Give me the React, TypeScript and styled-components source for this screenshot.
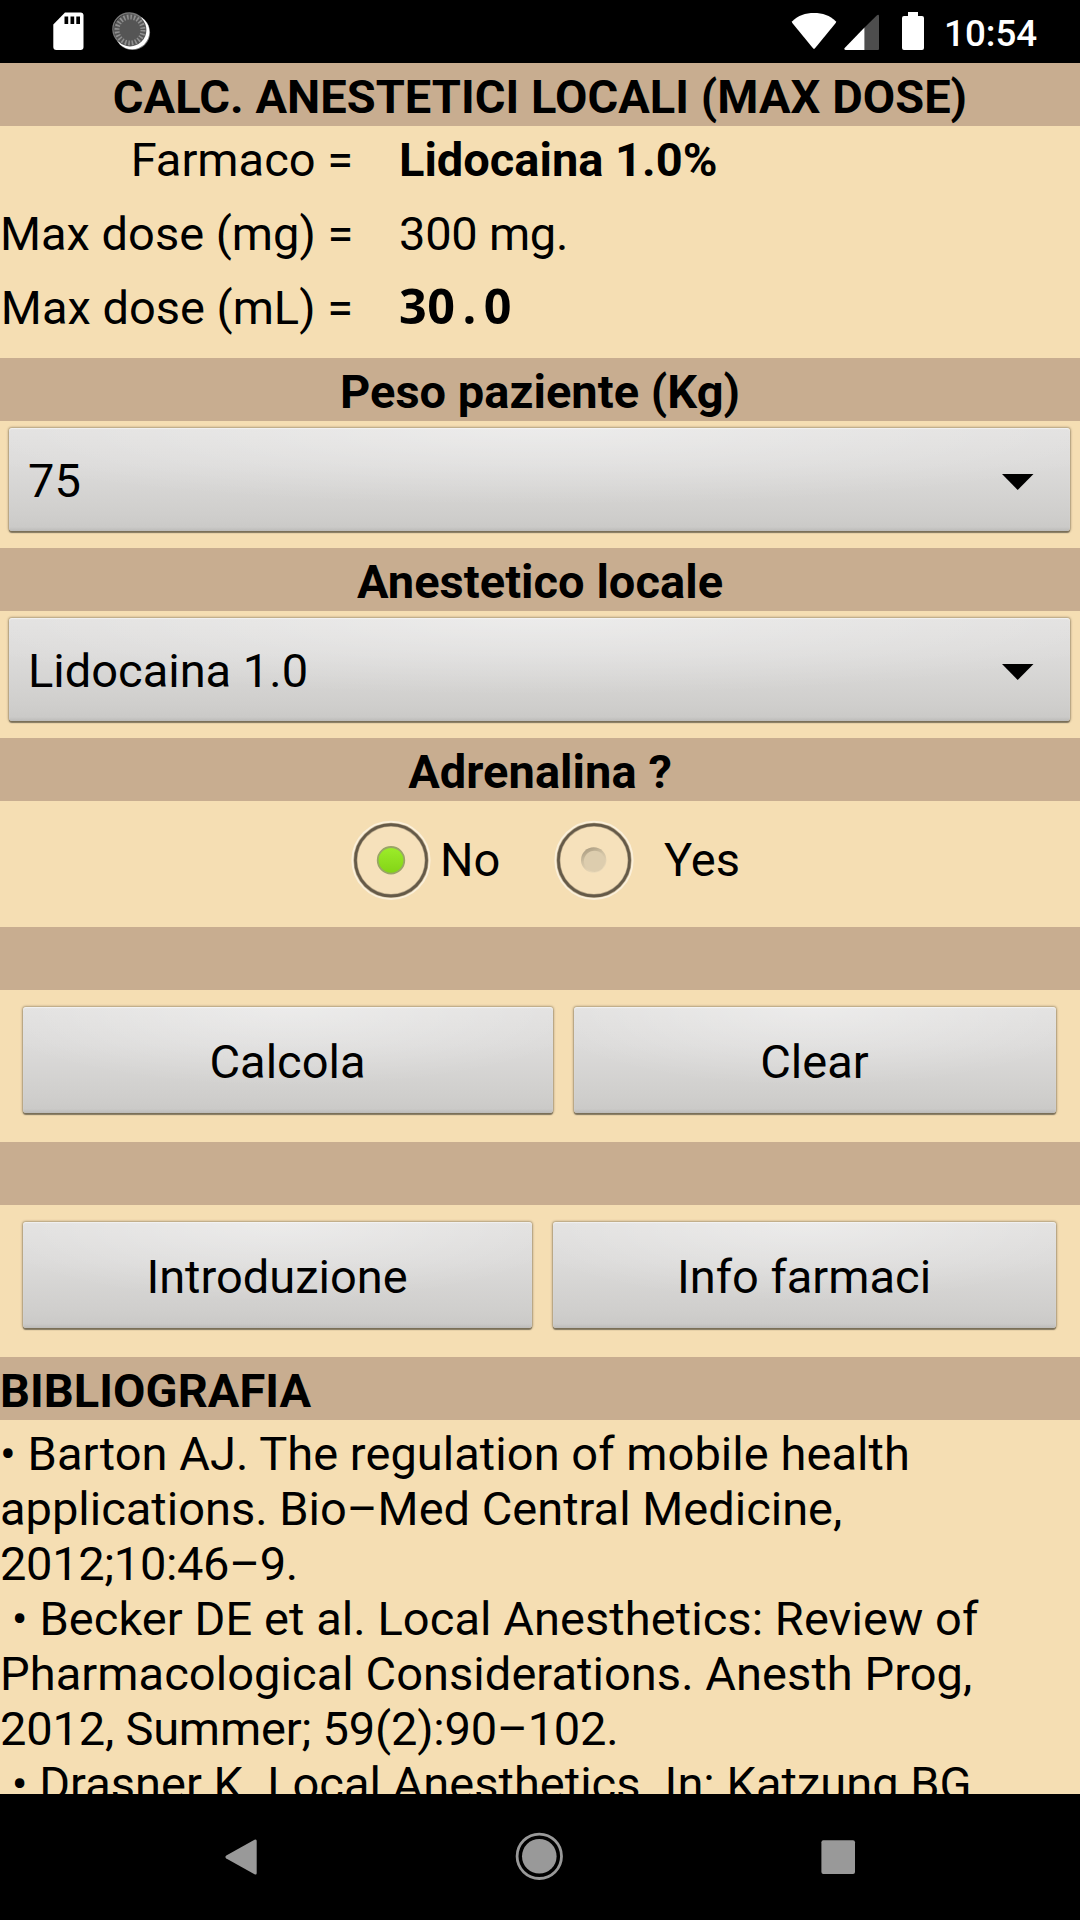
import React from "react";
import styled, { createGlobalStyle, css } from "styled-components";

const GlobalStyle = createGlobalStyle`
  html, body { margin: 0; padding: 0; background: #000; }
  * { box-sizing: border-box; }
`;

const Screen = styled.div`
  width: 1080px;
  height: 1920px;
  display: flex;
  flex-direction: column;
  overflow: hidden;
  background: #000;
  color: #000;
  font-family: Roboto, "Noto Sans", sans-serif;
  font-size: 47px;
  line-height: 55px;
`;

const StatusBar = styled.header`
  height: 63px;
  flex: none;
  display: flex;
  justify-content: space-between;
  background: #000;
`;

const StatusIcons = styled.div`
  display: flex;
  align-items: flex-start;
`;

const Clock = styled.time`
  width: 136px;
  padding: 12px 0 0 0;
  color: #fff;
  font-size: 36.75px;
  font-weight: 500;
  line-height: 43px;
`;

const Content = styled.main`
  height: 1731px;
  flex: none;
  overflow: hidden;
  background: #f5deb3;
`;

const Band = styled.h2<{ $align?: "left" | "center" }>`
  height: 63px;
  margin: 0;
  padding: 6px 0 0;
  background: #c8ad90;
  font-size: inherit;
  font-weight: 700;
  letter-spacing: 0.04px;
  text-align: ${(p) => p.$align ?? "center"};
`;

const Results = styled.dl`
  height: 232px;
  margin: 0;
  display: grid;
  grid-template-columns: 353px 1fr;
  grid-auto-rows: 74px;
  column-gap: 46px;
`;

const Label = styled.dt`
  padding-top: 6px;
  text-align: right;
  white-space: nowrap;
`;

const Value = styled.dd<{ $bold?: boolean }>`
  margin: 0;
  padding-top: 6px;
  font-weight: ${(p) => (p.$bold ? 700 : 400)};
  letter-spacing: ${(p) => (p.$bold ? 0 : -0.25)}px;
`;

const MonoValue = styled(Value)`
  padding-top: 4px;
  font-family: "Open Sans", "Noto Sans", sans-serif;
  font-size: 48.5px;
  font-weight: 700;
  letter-spacing: 0.5px;
`;

const MonoPoint = styled.span`
  display: inline-block;
  width: 28.2px;
  text-align: center;
`;

const raised = css`
  border: 0;
  border-radius: 3px;
  color: #000;
  font: inherit;
  background:
    radial-gradient(ellipse 60% 75% at 50% 0%, rgba(255, 255, 255, 0.36), rgba(255, 255, 255, 0) 100%),
    linear-gradient(to bottom, #e2e1e0 0%, #dcdbda 35%, #cfcecc 85%, #cbcac8 96%, #bcbbb9 100%);
  box-shadow:
    inset 0 1px 1px rgba(255, 255, 255, 0.5),
    0 0 2px 1px rgba(90, 80, 60, 0.45),
    0 2px 1px rgba(80, 75, 62, 0.65);
`;

const SpinnerRow = styled.div`
  height: 127px;
  padding: 7px 10px 0 9px;
`;

const Spinner = styled.button`
  ${raised}
  width: 100%;
  height: 103px;
  padding: 2px 36px 0 19px;
  display: flex;
  align-items: center;
  justify-content: space-between;
`;

const RadioRow = styled.div`
  height: 126px;
  padding: 19px 0 0 351px;
  display: flex;
  align-items: flex-start;
`;

const Option = styled.label<{ $gap: number; $width: number }>`
  width: ${(p) => p.$width}px;
  height: 80px;
  display: flex;
  align-items: center;
  gap: ${(p) => p.$gap}px;
`;

const OptionText = styled.span`
  padding-bottom: 2px;
`;

const ButtonRow = styled.div<{ $columns: string }>`
  height: 152px;
  padding: 17px 24px 0 23px;
  display: grid;
  grid-template-columns: ${(p) => p.$columns};
  grid-template-rows: 106px;
  column-gap: 21px;
`;

const ActionButton = styled.button`
  ${raised}
  padding: 2px 1px 0 0;
`;

const References = styled.div`
  padding-top: 6px;
`;

const ReferenceLine = styled.div<{ $tracking: number }>`
  height: 55px;
  white-space: pre;
  letter-spacing: ${(p) => p.$tracking}px;
`;

const NavBar = styled.nav`
  height: 126px;
  flex: none;
  display: flex;
  justify-content: space-between;
  padding: 37px 216px 0;
  background: #000;
`;

const CardGlyph = styled.svg`
  margin: 11px 0 0 53px;
`;

const SyncGlyph = styled.svg`
  margin: 11px 0 0 27px;
`;

const WifiGlyph = styled.svg`
  margin-top: 12px;
`;

const SignalGlyph = styled.svg`
  margin: 14px 0 0 6.5px;
`;

const BatteryGlyph = styled.svg`
  margin: 12px 20px 0 22.5px;
`;

const ArrowGlyph = styled.svg`
  margin-top: 2px;
`;

const CardIcon = () => (
  <CardGlyph width="32" height="40" viewBox="0 0 32 40">
    <path d="M12 1.5H27.5a3 3 0 0 1 3 3V36a3 3 0 0 1-3 3H3.3a3 3 0 0 1-3-3V13.5z" fill="#fff" />
    <path d="M11.5 5.5h3.7v7.5h-3.7zM17.5 5.5h3.7v7.5h-3.7zM23.3 5.5h3.7v7.5h-3.7z" fill="#000" />
  </CardGlyph>
);

const SyncIcon = () => (
  <SyncGlyph width="40" height="40" viewBox="0 0 40 40">
    <circle cx="20.5" cy="21.5" r="17.6" fill="#777" />
    <circle cx="20.1" cy="20.9" r="17.3" fill="#fff" />
    <circle cx="18" cy="19" r="16.4" fill="#555" />
    <circle cx="18" cy="19" r="13" fill="none" stroke="#909090" strokeWidth="5" strokeDasharray="1.6 1.803" />
    <path d="M6.500 30.500A16.300 16.300 0 1 1 29.500 7.500" fill="none" stroke="#777" strokeWidth="1.4" />
  </SyncGlyph>
);

const WifiIcon = () => (
  <WifiGlyph width="46" height="38" viewBox="0 0 46 38">
    <path d="M1.3 9.2C7 3.5 14.5 1 23 1s16 2.5 21.7 8.2q.7.9 0 1.8L24 36.3q-1 1-2 0L1.3 11q-.7-.9 0-1.8z" fill="#fff" />
  </WifiGlyph>
);

const SignalIcon = () => (
  <SignalGlyph width="36" height="37" viewBox="0 0 36 37">
    <path d="M20.5 13.5 33 1.3q2-1.3 2 1V35q0 1-1 1H20.5z" fill="#4d4d4d" />
    <path d="M20.5 13.5V36H1.5q-2-.5-.8-2z" fill="#fff" />
  </SignalGlyph>
);

const BatteryIcon = () => (
  <BatteryGlyph width="22" height="39" viewBox="0 0 22 39">
    <path d="M6 0h10v4h4q2 0 2 2v30q0 2-2 2H2q-2 0-2-2V6q0-2 2-2h4z" fill="#fff" />
  </BatteryGlyph>
);

const Arrow = () => (
  <ArrowGlyph width="32" height="18" viewBox="0 0 32 18">
    <path d="M0 1h31.5L15.7 17z" fill="#000" />
  </ArrowGlyph>
);

const Radio = ({ checked }: { checked: boolean }) => (
  <svg width="80" height="80" viewBox="0 0 80 80">
    <defs>
      <linearGradient id="lime" x1="0" y1="0" x2="0" y2="1">
        <stop offset="0" stopColor="#9ded2a" />
        <stop offset="1" stopColor="#83d316" />
      </linearGradient>
      <linearGradient id="dent" x1="0" y1="0" x2="0.5" y2="1">
        <stop offset="0" stopColor="#a09278" />
        <stop offset="0.5" stopColor="#d0c1a3" />
        <stop offset="1" stopColor="#ead9b9" />
      </linearGradient>
    </defs>
    <circle cx="40" cy="40.3" r="37.9" fill="#f6e1bb" stroke="#fbf0da" strokeWidth="3.4" />
    <circle cx="40" cy="40.3" r="35.6" fill="none" stroke="#b6a587" strokeWidth="4" />
    <circle cx="40" cy="40.3" r="35.6" fill="none" stroke="#655a48" strokeWidth="2.7" />
    {checked ? (
      <circle cx="40" cy="40.3" r="13.3" fill="url(#lime)" stroke="#9aa567" strokeWidth="1.8" />
    ) : (
      <>
        <circle cx="39.7" cy="40" r="12.7" fill="url(#dent)" />
        <circle cx="40.5" cy="41.3" r="10.6" fill="#ddcdae" />
      </>
    )}
  </svg>
);

const BackIcon = () => (
  <svg width="48" height="50" viewBox="0 0 48 50">
    <path d="M38.5 8.8q2.2-1 2.2 1.2V42q0 2.2-2.2 1.2L10.3 27.5q-1.800-1.500 0-3z" fill="#999" />
  </svg>
);

const HomeIcon = () => (
  <svg width="50" height="50" viewBox="0 0 50 50">
    <circle cx="24.3" cy="25.3" r="22.2" fill="none" stroke="#999" strokeWidth="2.8" />
    <circle cx="24.3" cy="25.3" r="17.3" fill="#999" />
  </svg>
);

const RecentsIcon = () => (
  <svg width="48" height="50" viewBox="0 0 48 50">
    <rect x="5.4" y="9.3" width="33.6" height="33.6" rx="2" fill="#999" />
  </svg>
);

const references = [
  { text: "• Barton AJ. The regulation of mobile health", tracking: 0.05 },
  { text: "applications. Bio–Med Central Medicine,", tracking: 0 },
  { text: "2012;10:46–9.", tracking: -0.35 },
  { text: " • Becker DE et al. Local Anesthetics: Review of", tracking: 0.07 },
  { text: "Pharmacological Considerations. Anesth Prog,", tracking: 0.06 },
  { text: "2012, Summer; 59(2):90–102.", tracking: -0.19 },
  { text: " • Drasner K. Local Anesthetics. In: Katzung BG,", tracking: 0.02 },
];

export default function App() {
  return (
    <Screen>
      <GlobalStyle />
      <StatusBar>
        <StatusIcons>
          <CardIcon />
          <SyncIcon />
        </StatusIcons>
        <StatusIcons>
          <WifiIcon />
          <SignalIcon />
          <BatteryIcon />
          <Clock>10:54</Clock>
        </StatusIcons>
      </StatusBar>
      <Content>
        <Band as="h1">CALC. ANESTETICI LOCALI (MAX DOSE)</Band>
        <Results>
          <Label>Farmaco =</Label>
          <Value $bold>Lidocaina 1.0%</Value>
          <Label>Max dose (mg) =</Label>
          <Value>300 mg.</Value>
          <Label>Max dose (mL) =</Label>
          <MonoValue>
            30<MonoPoint>.</MonoPoint>0
          </MonoValue>
        </Results>
        <Band>Peso paziente (Kg)</Band>
        <SpinnerRow>
          <Spinner>
            75
            <Arrow />
          </Spinner>
        </SpinnerRow>
        <Band>Anestetico locale</Band>
        <SpinnerRow>
          <Spinner>
            Lidocaina 1.0
            <Arrow />
          </Spinner>
        </SpinnerRow>
        <Band>Adrenalina ?</Band>
        <RadioRow>
          <Option $gap={9} $width={203}>
            <Radio checked />
            <OptionText>No</OptionText>
          </Option>
          <Option $gap={30} $width={200}>
            <Radio checked={false} />
            <OptionText>Yes</OptionText>
          </Option>
        </RadioRow>
        <Band />
        <ButtonRow $columns="530px 1fr">
          <ActionButton>Calcola</ActionButton>
          <ActionButton>Clear</ActionButton>
        </ButtonRow>
        <Band />
        <ButtonRow $columns="509px 1fr">
          <ActionButton>Introduzione</ActionButton>
          <ActionButton>Info farmaci</ActionButton>
        </ButtonRow>
        <Band $align="left">BIBLIOGRAFIA</Band>
        <References>
          {references.map((line) => (
            <ReferenceLine key={line.text} $tracking={line.tracking}>
              {line.text}
            </ReferenceLine>
          ))}
        </References>
      </Content>
      <NavBar>
        <BackIcon />
        <HomeIcon />
        <RecentsIcon />
      </NavBar>
    </Screen>
  );
}
